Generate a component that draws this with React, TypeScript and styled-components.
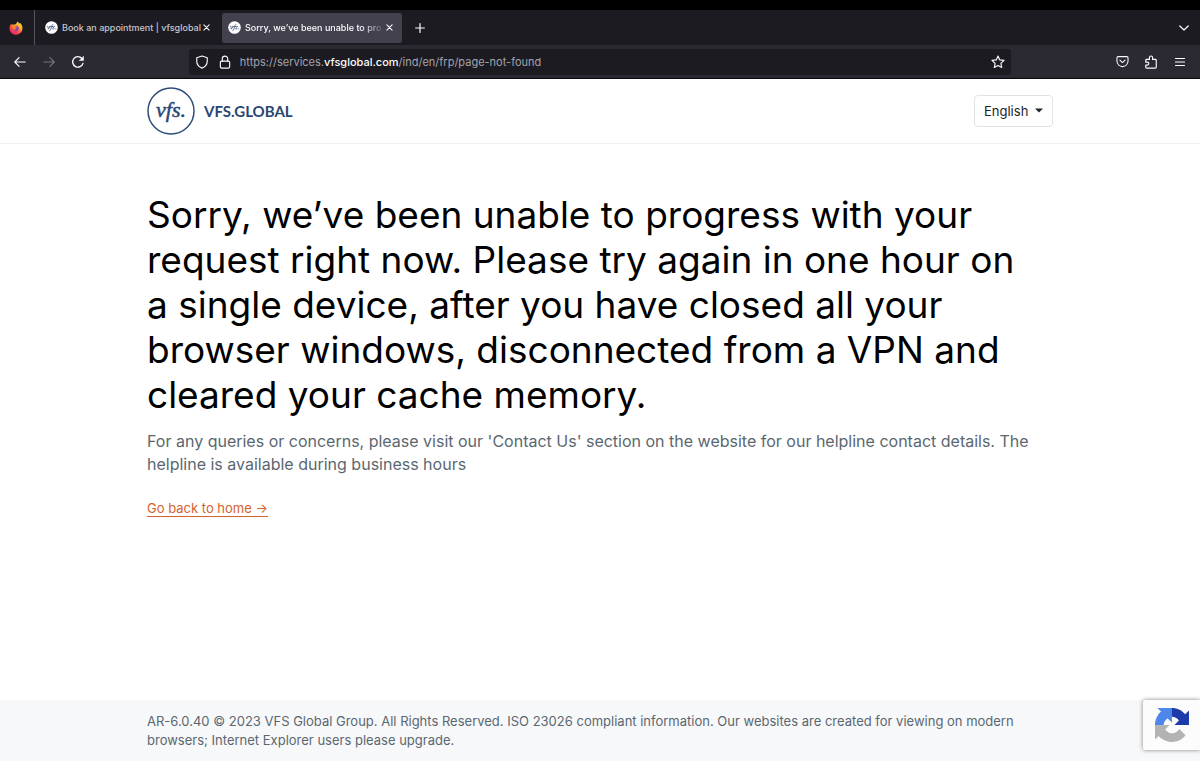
import React from "react";
import styled, { createGlobalStyle, css } from "styled-components";

const GlobalStyle = createGlobalStyle`
  *, *::before, *::after { box-sizing: border-box; }
  body {
    margin: 0;
    background: #ffffff;
    color: #000000;
    font-family: Inter, "Liberation Sans", sans-serif;
  }
  button, select { font-family: inherit; }
`;

const Screen = styled.div`
  display: flex;
  flex-direction: column;
  min-height: 100vh;
`;

const Chrome = styled.div`
  border-top: 10px solid #000000;
  border-bottom: 1px solid #08080c;
  background: #2b2a33;
  color: #fbfbfe;
`;

const TabStrip = styled.div`
  display: flex;
  align-items: center;
  height: 35px;
  padding-right: 8px;
  background: #1c1b22;
`;

const PinnedTab = styled.button`
  display: flex;
  align-items: center;
  width: 35px;
  height: 35px;
  padding: 0 0 0 9px;
  border: 0;
  border-right: 1px solid #55545e;
  background: none;
`;

const Tab = styled.div<{ $active?: boolean }>`
  display: flex;
  align-items: center;
  width: 180px;
  height: 30px;
  margin-left: ${(p) => (p.$active ? 3 : 4)}px;
  padding: 0 9px 0 6px;
  border-radius: 3px;
  font-size: 9px;
  line-height: 12px;
  font-weight: 500;
  ${(p) =>
    p.$active
      ? css`
          background: #42414d;
          color: #fbfbfe;
        `
      : css`
          color: #c6c6cb;
        `}
`;

const TabTitle = styled.span<{ $fade?: boolean }>`
  flex: 1;
  min-width: 0;
  margin-left: 4px;
  overflow: hidden;
  white-space: nowrap;
  ${(p) =>
    p.$fade &&
    css`
      mask-image: linear-gradient(to left, transparent, #000 24px);
    `}
`;

const Favicon = styled.svg`
  flex: none;
  width: 13px;
  height: 13px;
`;

const IconButton = styled.button<{ $size?: number; $dim?: boolean }>`
  display: flex;
  flex: none;
  align-items: center;
  justify-content: center;
  width: ${(p) => p.$size ?? 16}px;
  height: ${(p) => p.$size ?? 16}px;
  padding: 0;
  border: 0;
  background: none;
  color: ${(p) => (p.$dim ? "#75747e" : "#fbfbfe")};
`;

const TabClose = styled(IconButton)`
  width: 7px;
`;

const Spacer = styled.div`
  flex: 1;
`;

const Toolbar = styled.div`
  display: grid;
  grid-template-columns: 177fr 823fr 177fr;
  align-items: center;
  gap: 12px;
  height: 33px;
`;

const NavGroup = styled.div`
  display: flex;
  gap: 13px;
  padding-left: 12px;
`;

const ToolGroup = styled.div`
  display: flex;
  justify-content: flex-end;
  gap: 13px;
  padding-right: 12px;
`;

const UrlBar = styled.div`
  display: flex;
  align-items: center;
  gap: 7px;
  height: 26px;
  padding: 0 5px;
  border-radius: 3px;
  background: #1c1b22;
`;

const UrlText = styled.div`
  flex: 1;
  min-width: 0;
  overflow: hidden;
  color: #a3a3aa;
  font-size: 11px;
  line-height: 16px;
  white-space: nowrap;

  strong {
    color: #fbfbfe;
    font-weight: 500;
  }
`;

const Container = styled.div`
  width: 100%;
  max-width: 930px;
  margin: 0 auto;
  padding: 0 12px;
`;

const SiteHeader = styled.header`
  border-bottom: 1px solid #eff0f2;
`;

const HeaderRow = styled(Container)`
  display: flex;
  align-items: center;
  justify-content: space-between;
  height: 64px;
`;

const Brand = styled.a`
  display: flex;
  align-items: center;
  gap: 9px;
  color: #2a4672;
  font-family: Lato, sans-serif;
  font-size: 15px;
  font-weight: 700;
  line-height: 20px;
  text-decoration: none;
`;

const LanguageField = styled.label`
  position: relative;
  display: block;

  svg {
    position: absolute;
    top: 13px;
    right: 10px;
    pointer-events: none;
  }
`;

const LanguageSelect = styled.select`
  width: 79px;
  height: 32px;
  padding: 0 0 0 9px;
  border: 1px solid #dfe3e6;
  border-radius: 4px;
  background: #ffffff;
  color: #212529;
  font-size: 13px;
  appearance: none;
`;

const Main = styled.main`
  flex: 1;
  padding: 48px 0;
`;

const Title = styled.h1`
  margin: 0 0 13px;
  padding-right: 16px;
  font-size: 37px;
  font-weight: 400;
  line-height: 45px;
`;

const Lead = styled.p`
  margin: 0 0 24px;
  color: #5b6770;
  font-size: 16px;
  line-height: 23px;
`;

const HomeLink = styled.a`
  display: block;
  width: fit-content;
  border-bottom: 1px solid #d4622d;
  color: #d4622d;
  font-size: 13px;
  line-height: 16px;
  text-decoration: none;
`;

const SiteFooter = styled.footer`
  padding: 12px 0 11px;
  background: #f7f8fa;
  color: #5b6770;
  font-size: 13px;
  line-height: 19px;

  p { margin: 0; }
`;

const CaptchaBadge = styled.div`
  position: fixed;
  right: 0;
  bottom: 11px;
  width: 57px;
  height: 50px;
  padding: 8px 11px 8px 12px;
  border-radius: 2px 0 0 2px;
  background: #fcfcfc;
  box-shadow: 0 0 4px #808080;
`;

function Stroke({
  size = 14,
  box = 16,
  width = 1.3,
  children,
}: {
  size?: number;
  box?: number;
  width?: number;
  children: React.ReactNode;
}) {
  return (
    <svg
      width={size}
      height={size}
      viewBox={`0 0 ${box} ${box}`}
      fill="none"
      stroke="currentColor"
      strokeWidth={width}
      strokeLinecap="round"
      strokeLinejoin="round"
      aria-hidden="true"
    >
      {children}
    </svg>
  );
}

function VfsFavicon() {
  return (
    <Favicon viewBox="0 0 13 13" aria-hidden="true">
      <circle cx="6.5" cy="6.5" r="6.3" fill="#fff" />
      <path
        d="M2.2 5.4c1-.8 1 .6 1 2.6 1-.5 1.8-1.7 1.5-2.7M4.8 9.8c1.5.2 1.5-6.5 3-6.4M5.4 5.6h2.3M9.6 5.5c-1.3-.4-1.9.5-.9 1.2s.3 1.7-1.2 1.1M10.7 8h.1"
        fill="none"
        stroke="#4a5a82"
        strokeWidth=".9"
        strokeLinecap="round"
      />
    </Favicon>
  );
}

function FirefoxMark() {
  return (
    <svg width="14" height="14" viewBox="0 0 14 14" aria-hidden="true">
      <defs>
        <linearGradient id="flame" x1=".85" y1=".05" x2=".2" y2=".95">
          <stop offset="0" stopColor="#fff04a" />
          <stop offset=".35" stopColor="#ffa329" />
          <stop offset=".65" stopColor="#ff4f45" />
          <stop offset="1" stopColor="#e3216e" />
        </linearGradient>
      </defs>
      <path
        d="M8.3.4c1 .6 1.5 1.4 1.7 2.3.5-.2.7-.6.7-1C12.5 3 13.5 5 13.5 7.3 13.5 11 10.6 13.7 7 13.7S.5 11 .5 7.4C.5 5.5 1.2 4 2.3 2.8c0 .5.2.8.4 1 .8-.4 1.6-.4 2.2-.2C5.8 3.5 7.9 2.8 8.3.4z"
        fill="url(#flame)"
      />
      <circle cx="7" cy="7.5" r="2.7" fill="#8546c6" />
      <path d="M3 4.6c1.3-.5 2.7-.2 3.5.9.6.3 1.2.2 1.6.4-.2.8-1.4 1-2 1.5-.3.6.2 1.5 1.2 1.5-2 .8-4.3-.9-4.3-4.3z" fill="#ff8a2e" />
    </svg>
  );
}

function BrandMark() {
  return (
    <svg width="48" height="48" viewBox="0 0 48 48" aria-hidden="true">
      <circle cx="24" cy="24" r="23" fill="#fff" stroke="#2f4d79" strokeWidth="1.5" />
      <text
        x="24"
        y="30"
        textAnchor="middle"
        fontFamily="Liberation Serif, serif"
        fontStyle="italic"
        fontWeight="400"
        fontSize="22"
        fill="#2a4672"
        stroke="#2a4672"
        strokeWidth=".5"
      >
        vfs.
      </text>
    </svg>
  );
}

function CaptchaMark() {
  return (
    <svg width="34" height="34" viewBox="0 0 64 64" role="img" aria-label="reCAPTCHA">
      <path
        d="M64 31.955l-.033-1.37V4.687l-7.16 7.16C50.948 4.674 42.033.093 32.05.093c-10.4 0-19.622 4.96-25.458 12.64l11.736 11.86a15.55 15.55 0 0 1 4.754-5.334c2.05-1.6 4.952-2.906 8.968-2.906.485 0 .86.057 1.135.163 4.976.393 9.288 3.14 11.828 7.124l-8.307 8.307L64 31.953"
        fill="#1c3aa9"
      />
      <path
        d="M31.862.094l-1.37.033H4.594l7.16 7.16C4.58 13.147 0 22.06 0 32.046c0 10.4 4.96 19.622 12.64 25.458L24.5 45.768a15.55 15.55 0 0 1-5.334-4.754c-1.6-2.05-2.906-4.952-2.906-8.968 0-.485.057-.86.163-1.135.393-4.976 3.14-9.288 7.124-11.828l8.307 8.307L31.86.095"
        fill="#4f86ec"
      />
      <path
        d="M.001 32.045l.033 1.37v25.898l7.16-7.16c5.86 7.173 14.774 11.754 24.76 11.754 10.4 0 19.622-4.96 25.458-12.64l-11.736-11.86a15.55 15.55 0 0 1-4.754 5.334c-2.05 1.6-4.952 2.906-8.968 2.906-.485 0-.86-.057-1.135-.163-4.976-.393-9.288-3.14-11.828-7.124l8.307-8.307c-10.522.04-22.4.066-27.295-.005"
        fill="#b3b3b3"
      />
    </svg>
  );
}

function BrowserTab({ title, active }: { title: string; active?: boolean }) {
  return (
    <Tab $active={active} role="tab" aria-selected={!!active}>
      <VfsFavicon />
      <TabTitle $fade={active}>{title}</TabTitle>
      <TabClose aria-label={`Close ${title}`}>
        <Stroke size={7} box={8} width={1.2}>
          <path d="M1 1l6 6M7 1L1 7" />
        </Stroke>
      </TabClose>
    </Tab>
  );
}

function BrowserChrome() {
  return (
    <Chrome>
      <TabStrip>
        <PinnedTab aria-label="Firefox View">
          <FirefoxMark />
        </PinnedTab>
        <BrowserTab title="Book an appointment | vfsglobal" />
        <BrowserTab title="Sorry, we’ve been unable to pro" active />
        <IconButton $size={36} aria-label="New tab">
          <Stroke size={10} box={10} width={1.2}>
            <path d="M5 .6v8.8M.6 5h8.8" />
          </Stroke>
        </IconButton>
        <Spacer />
        <IconButton aria-label="List all tabs">
          <Stroke size={10} box={10} width={1.2}>
            <path d="M.8 3L5 7l4.2-4" />
          </Stroke>
        </IconButton>
      </TabStrip>
      <Toolbar>
        <NavGroup>
          <IconButton aria-label="Back">
            <Stroke>
              <path d="M14 8H2M7 3L2 8l5 5" />
            </Stroke>
          </IconButton>
          <IconButton $dim aria-label="Forward">
            <Stroke>
              <path d="M2 8h12M9 3l5 5-5 5" />
            </Stroke>
          </IconButton>
          <IconButton aria-label="Reload">
            <Stroke width={1.5}>
              <path d="M13.7 9.5A6 6 0 1 1 12.5 4" />
              <path d="M14.3 1.8v4.5H9.8z" fill="currentColor" strokeWidth=".6" />
            </Stroke>
          </IconButton>
        </NavGroup>
        <UrlBar>
          <IconButton aria-label="Tracking protection">
            <Stroke>
              <path d="M8 1.2l6 2v4c0 3.4-2.5 6.4-6 7.8-3.5-1.4-6-4.4-6-7.8v-4z" />
            </Stroke>
          </IconButton>
          <IconButton aria-label="Site security">
            <Stroke>
              <rect x="2.7" y="7" width="10.6" height="8" rx="1.5" />
              <path d="M4.9 7V4.4a3.1 3.1 0 0 1 6.2 0V7" />
            </Stroke>
          </IconButton>
          <UrlText role="textbox" aria-label="Address" contentEditable suppressContentEditableWarning spellCheck={false}>
            https://services.<strong>vfsglobal.com</strong>/ind/en/frp/page-not-found
          </UrlText>
          <IconButton aria-label="Bookmark this page">
            <Stroke>
              <path d="M8 1.2l2 4.4 4.9.6-3.6 3.3 1 4.8L8 11.9l-4.3 2.4 1-4.8L1.1 6.2 6 5.6z" />
            </Stroke>
          </IconButton>
        </UrlBar>
        <ToolGroup>
          <IconButton aria-label="Save to Pocket">
            <Stroke size={13}>
              <path d="M2.7 2h10.6A1.5 1.5 0 0 1 14.8 3.5V7.5a6.8 6.8 0 0 1-13.6 0V3.5A1.5 1.5 0 0 1 2.7 2z" />
              <path d="M4.8 6.2L8 9.3l3.2-3.1" />
            </Stroke>
          </IconButton>
          <IconButton aria-label="Extensions">
            <Stroke>
              <path d="M6.2 5V3a1.8 1.8 0 0 1 3.6 0v2h3.2a1 1 0 0 1 1 1v8a1 1 0 0 1-1 1H3a1 1 0 0 1-1-1v-2.5h1.8a1.7 1.7 0 0 0 0-3.4H2V6a1 1 0 0 1 1-1z" />
            </Stroke>
          </IconButton>
          <IconButton aria-label="Menu">
            <Stroke size={12} box={12} width={1.2}>
              <path d="M1.5 2.5h9M1.5 6h9M1.5 9.5h9" />
            </Stroke>
          </IconButton>
        </ToolGroup>
      </Toolbar>
    </Chrome>
  );
}

export default function App() {
  return (
    <Screen>
      <GlobalStyle />
      <BrowserChrome />
      <SiteHeader>
        <HeaderRow>
          <Brand href="#">
            <BrandMark />
            VFS.GLOBAL
          </Brand>
          <LanguageField>
            <LanguageSelect aria-label="Language" defaultValue="English">
              <option>English</option>
            </LanguageSelect>
            <svg width="8" height="5" viewBox="0 0 8 5" aria-hidden="true">
              <path d="M0 .5h8L4 4.5z" fill="#212529" />
            </svg>
          </LanguageField>
        </HeaderRow>
      </SiteHeader>
      <Main>
        <Container>
          <Title>
            Sorry, we’ve been unable to progress with your request right now. Please try again in one hour on a single
            device, after you have closed all your browser windows, disconnected from a VPN and cleared your cache
            memory.
          </Title>
          <Lead>
            For any queries or concerns, please visit our 'Contact Us' section on the website for our helpline contact
            details. The helpline is available during business hours
          </Lead>
          <HomeLink href="#">Go back to home →</HomeLink>
        </Container>
      </Main>
      <SiteFooter>
        <Container>
          <p>
            AR-6.0.40 © 2023 VFS Global Group. All Rights Reserved. ISO 23026 compliant information. Our websites are
            created for viewing on modern browsers; Internet Explorer users please upgrade.
          </p>
        </Container>
      </SiteFooter>
      <CaptchaBadge>
        <CaptchaMark />
      </CaptchaBadge>
    </Screen>
  );
}
